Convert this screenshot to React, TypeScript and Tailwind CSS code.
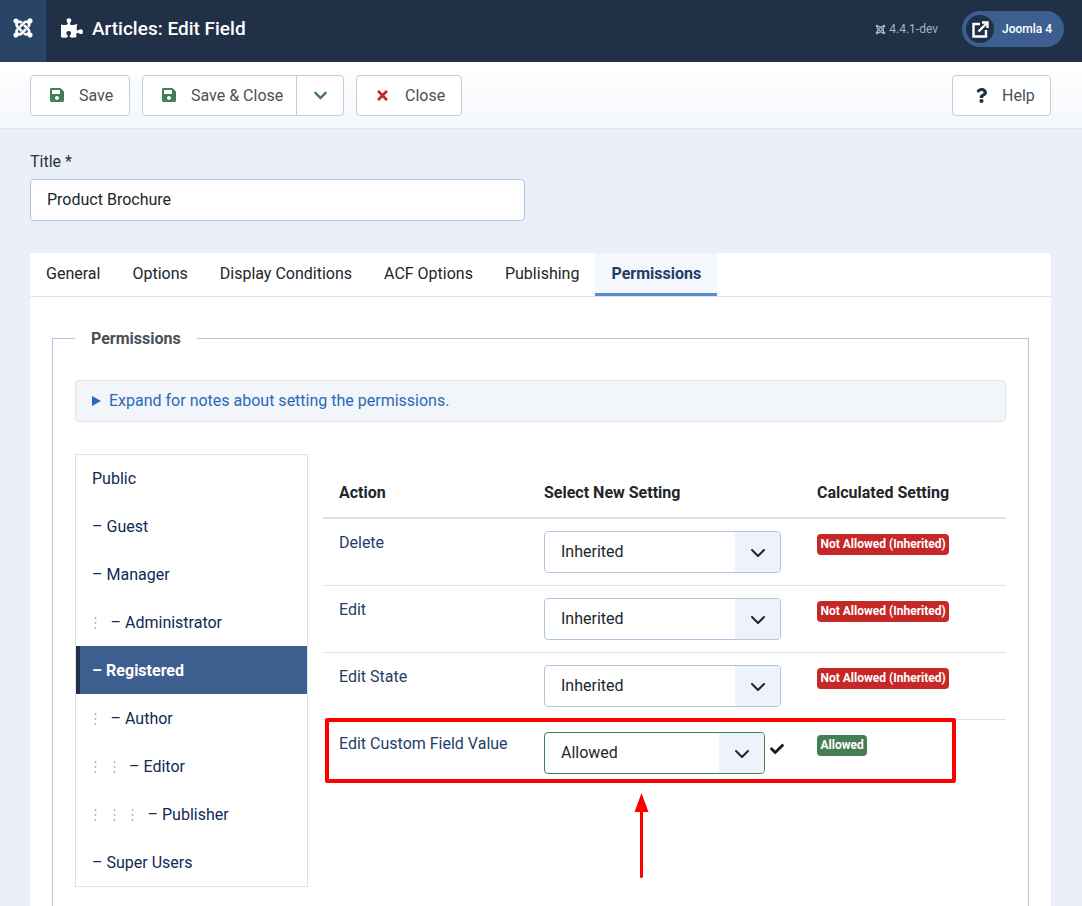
import React from "react";
import { FaJoomla, FaPuzzlePiece, FaSave, FaTimes, FaChevronDown, FaQuestion, FaCheck } from "react-icons/fa";

function Btn({ icon, label, className = "" }: { icon: React.ReactNode; label: string; className?: string }) {
  return (
    <button className={`h-[41px] flex items-center bg-white border border-[#c3cedb] rounded-[4px] text-[16px] text-[#495057] ${className}`}>
      {icon}
      <span className="pt-[2px]">{label}</span>
    </button>
  );
}

const Chevron = () => (
  <svg className="mt-[2px]" width="16" height="16" viewBox="0 0 16 16" fill="none" stroke="#212529" strokeWidth="2" strokeLinecap="round" strokeLinejoin="round">
    <path d="M2 5l6 6 6-6" />
  </svg>
);

function Sel({ value, green }: { value: string; green?: boolean }) {
  return (
    <div className={`h-[42px] flex items-stretch rounded-[4px] border overflow-hidden bg-white ${green ? "w-[221px] border-[#457d54]" : "w-[237px] border-[#b2c4e0]"}`}>
      <span className="flex-1 flex items-center pl-4 text-[16px] text-[#22262a]">{value}</span>
      <span className="w-[45px] bg-[#eef3fb] flex items-center justify-center"><Chevron /></span>
    </div>
  );
}

function Badge({ text, green }: { text: string; green?: boolean }) {
  return (
    <span className={`inline-block h-[21px] leading-[20px] px-[3.5px] rounded-[4px] text-white text-[12px] font-bold ${green ? "bg-[#457d54]" : "bg-[#c52827]"}`}>{text}</span>
  );
}

const Dots = () => (
  <span className="inline-flex w-[18.5px] h-[14px] items-center pl-[2px]">
    <svg width="3" height="14" viewBox="0 0 3 14" fill="#a9adb2"><circle cx="1.5" cy="2" r="0.9" /><circle cx="1.5" cy="7" r="0.9" /><circle cx="1.5" cy="12" r="0.9" /></svg>
  </span>
);

const groups: { name: string; depth: number; active?: boolean; plain?: boolean }[] = [
  { name: "Public", depth: 0, plain: true },
  { name: "Guest", depth: 0 },
  { name: "Manager", depth: 0 },
  { name: "Administrator", depth: 1 },
  { name: "Registered", depth: 0, active: true },
  { name: "Author", depth: 1 },
  { name: "Editor", depth: 2 },
  { name: "Publisher", depth: 3 },
  { name: "Super Users", depth: 0 },
];

const rows = [
  { action: "Delete", value: "Inherited", badge: "Not Allowed (Inherited)" },
  { action: "Edit", value: "Inherited", badge: "Not Allowed (Inherited)" },
  { action: "Edit State", value: "Inherited", badge: "Not Allowed (Inherited)" },
];

const tabs = ["General", "Options", "Display Conditions", "ACF Options", "Publishing"];

export default function App() {
  return (
    <div className="relative w-[1082px] h-[906px] overflow-hidden bg-[#ebf0f8] text-[16px] text-[#22262a]" style={{ fontFamily: "Roboto, 'Liberation Sans', sans-serif" }}>
      <header className="h-[62px] bg-[#1f3047] flex items-center text-white">
        <div className="w-[46px] h-full bg-[#2a4468] flex items-center justify-center pb-[6px] pr-[1px]"><FaJoomla size={22} /></div>
        <div className="flex-1 flex items-center pb-[4px]">
          <FaPuzzlePiece size={22} className="ml-[15px] mb-[2px]" />
          <h1 className="ml-[9px] mb-[2px] text-[19px] font-medium leading-none">Articles: Edit Field</h1>
          <div className="ml-auto flex items-center text-[12px] text-[#a9b3c1]">
            <FaJoomla size={11} className="mr-[3px]" />
            <span>4.4.1-dev</span>
          </div>
          <div className="ml-[24px] mr-[18px] w-[102px] h-[36px] rounded-full bg-[#3d5f8f] flex items-center pl-[4px]">
            <span className="w-[28px] h-[28px] rounded-full bg-[#1f3047] flex items-center justify-center">
              <svg width="17" height="17" viewBox="0 0 17 17" fill="none" stroke="white" strokeWidth="2.4">
                <path d="M8 3H1.5V15.5H14V9" />
                <path d="M6.5 10.5L14.5 2.5" />
                <path d="M10 1.5H15.5V7" />
              </svg>
            </span>
            <span className="ml-[8px] text-[12px] font-medium">Joomla 4</span>
          </div>
        </div>
      </header>

      <div className="h-[67px] bg-gradient-to-b from-white to-[#f4f7fc] border-b border-[#e3e8ef] flex items-center pl-[30px] pr-[31px] gap-[12px]">
        <Btn className="w-[100px] pl-[18px]" icon={<FaSave size={16} className="text-[#457d54] mr-[14px]" />} label="Save" />
        <div className="flex h-[41px] w-[202px] bg-white border border-[#c3cedb] rounded-[4px] text-[#495057]">
          <div className="w-[154px] flex items-center pl-[18px] border-r border-[#c3cedb]">
            <FaSave size={16} className="text-[#457d54] mr-[14px]" />
            <span className="pt-[2px]">Save &amp; Close</span>
          </div>
          <div className="flex-1 flex items-center justify-center"><FaChevronDown size={15} className="text-[#457d54]" /></div>
        </div>
        <Btn className="w-[106px] pl-[18px]" icon={<FaTimes size={15} className="text-[#c52827] mr-[15px]" />} label="Close" />
        <Btn className="ml-auto w-[99px] pl-[21px]" icon={<FaQuestion size={15} className="text-[#1f3047] mr-[13px]" />} label="Help" />
      </div>

      <main className="pl-[30px] pr-[31px]">
        <label className="block mt-[23px] h-[20px] leading-[20px] text-[#1f3047]">Title *</label>
        <div className="mt-[7px] w-[495px] h-[42px] bg-white border border-[#b2c4e0] rounded-[4px] flex items-center pl-4 text-[#22262a]">Product Brochure</div>

        <section className="mt-[32px] bg-white rounded-t-[3px]">
          <nav className="h-[44px] flex border-b border-[#dfe5ef] text-[#22262a]">
            <div className="flex">
              {tabs.map((t) => <span key={t} className="px-4 h-[43px] leading-[41px]">{t}</span>)}
              <span className="px-4 h-[43px] leading-[41px] font-bold text-[#1f3d68] bg-[#f4f7fb] border-b-[3px] border-[#5a8ac9]">Permissions</span>
            </div>
          </nav>

          <div className="pt-[30px] px-[22px]">
            <fieldset className="border border-[#b2c4e0] h-[620px] px-[22px]">
              <legend className="px-[16px] pt-[2px] font-bold text-[#495057] leading-[20px]">Permissions</legend>
              <div className="mt-[31px] h-[42px] bg-[#f2f6fa] border border-[#dfe5ef] rounded-[4px] flex items-center pl-4 text-[#2a69b8]">
                <span className="w-0 h-0 border-y-[5px] border-y-transparent border-l-[9px] border-l-[#2a69b8] mr-[8px]" />
                <span>Expand for notes about setting the permissions.</span>
              </div>

              <div className="mt-[32px] flex">
                <ul className="w-[233px] h-[433px] border border-[#dee2e6] text-[#0e2a55] shrink-0">
                  {groups.map((g, i) => (
                    <li key={g.name} className={`h-[48px] flex items-center pt-[2px] ${i === 0 ? "-mt-[1px]" : ""} ${g.active ? "bg-[#3d5f8f] border-l-4 border-[#1f3047] pl-[12px] text-white font-bold" : "pl-[16px]"}`}>
                      {Array.from({ length: g.depth }).map((_, d) => <Dots key={d} />)}
                      {!g.plain && <span className="mr-[4px]">–</span>}
                      <span>{g.name}</span>
                    </li>
                  ))}
                </ul>

                <div className="ml-[15px] flex-1">
                  <div className="h-[65px] flex items-center pt-[15px] border-b-2 border-[#dee2e6] font-bold text-[#22262a]">
                    <span className="w-[221px] pl-4">Action</span>
                    <span className="w-[273px]">Select New Setting</span>
                    <span>Calculated Setting</span>
                  </div>
                  {rows.map((r) => (
                    <div key={r.action} className="h-[67px] flex items-start pt-[12px] border-b border-[#dee2e6]">
                      <span className="w-[221px] pl-4 text-[#1f3d68]">{r.action}</span>
                      <span className="w-[273px]"><Sel value={r.value} /></span>
                      <span className="pt-[3px] leading-none"><Badge text={r.badge} /></span>
                    </div>
                  ))}
                  <div className="h-[67px] flex items-start pt-[12px]">
                    <span className="w-[221px] pl-4 text-[#1f3d68]">Edit Custom Field Value</span>
                    <span className="w-[273px] flex items-start">
                      <Sel value="Allowed" green />
                      <FaCheck size={14} className="ml-[5px] mt-[10px] text-[#1d1d1d]" />
                    </span>
                    <span className="pt-[3px] leading-none"><Badge text="Allowed" green /></span>
                  </div>
                </div>
              </div>
            </fieldset>
          </div>
        </section>
      </main>

      <div className="absolute left-[325px] top-[718px] w-[631px] h-[65px] border-[4px] border-[#fe0000] rounded-[2px]" />
      <svg className="absolute left-[630px] top-[790px]" width="24" height="92" viewBox="0 0 24 92">
        <path d="M11.5 3 L18.5 22 H4.5 Z" fill="#fe0000" />
        <rect x="10" y="20" width="3" height="68" rx="1.5" fill="#fe0000" />
      </svg>
    </div>
  );
}
